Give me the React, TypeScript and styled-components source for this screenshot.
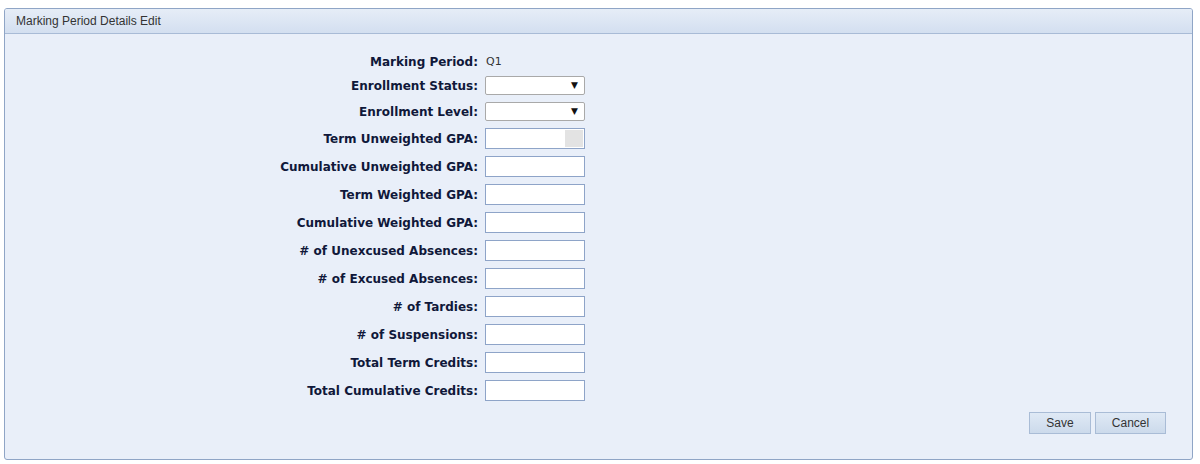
import React from "react";
import styled, { createGlobalStyle } from "styled-components";

const Global = createGlobalStyle`
  html, body { margin: 0; padding: 0; background: #ffffff; }
  body { font-family: "DejaVu Sans", Verdana, sans-serif; }
  * { box-sizing: border-box; }
`;

const Page = styled.div`
  padding: 8px 7px 4px 4px;
`;

const Panel = styled.section`
  border: 1px solid #8fa5c6;
  border-radius: 3px;
  background: #e9eff9;
  height: 452px;
  display: flex;
  flex-direction: column;
  overflow: hidden;
`;

const Header = styled.header`
  height: 25px;
  display: flex;
  align-items: center;
  padding-left: 11px;
  background: linear-gradient(to bottom, #e6edf7 0%, #d3dff0 100%);
  border-bottom: 1px solid #a8bbd6;
  font-family: "Liberation Sans", Arial, sans-serif;
  font-size: 12px;
  color: #333333;
`;

const Body = styled.div`
  flex: 1;
  display: flex;
  flex-direction: column;
  padding-top: 15px;
`;

const Form = styled.div`
  display: grid;
  grid-template-columns: 473px 1fr;
  column-gap: 7px;
`;

const Label = styled.div<{ $h: number }>`
  height: ${(p) => p.$h}px;
  padding-top: 2px;
  display: flex;
  align-items: center;
  justify-content: flex-end;
  font-family: "DejaVu Sans", Verdana, sans-serif;
  font-weight: bold;
  font-size: 12px;
  color: #10183a;
  white-space: nowrap;
`;

const Cell = styled.div<{ $h: number }>`
  height: ${(p) => p.$h}px;
  display: flex;
  align-items: center;
`;

const Value = styled.span`
  font-family: "DejaVu Sans", sans-serif;
  font-size: 11px;
  color: #333333;
  padding-left: 1px;
  padding-top: 2px;
`;

const Select = styled.div`
  width: 100px;
  height: 19px;
  background: #ffffff;
  border: 1px solid #a9a9a9;
  border-radius: 2px;
  display: flex;
  align-items: center;
  justify-content: flex-end;
  padding-right: 6px;
  font-size: 9px;
  color: #111111;
`;

const Input = styled.div`
  width: 100px;
  height: 21px;
  background: #ffffff;
  border: 1px solid #8ea4c8;
  display: flex;
  justify-content: flex-end;
  padding: 1px;
`;

const Spin = styled.div`
  width: 18px;
  height: 100%;
  background: #e3e3e3;
`;

const Actions = styled.div`
  display: flex;
  justify-content: flex-end;
  gap: 4px;
  padding-right: 26px;
  margin-top: 8px;
`;

const Button = styled.button<{ $w: number }>`
  width: ${(p) => p.$w}px;
  height: 22px;
  border: 1px solid #a9bcd6;
  background: linear-gradient(to bottom, #dfe9f5 0%, #ccdaeb 100%);
  font-family: "Liberation Sans", Arial, sans-serif;
  font-size: 12px;
  color: #333333;
  padding: 0;
  cursor: pointer;
`;

type Field = { label: string; kind: "value" | "select" | "input" | "locked"; value?: string };

const fields: Field[] = [
  { label: "Marking Period:", kind: "value", value: "Q1" },
  { label: "Enrollment Status:", kind: "select" },
  { label: "Enrollment Level:", kind: "select" },
  { label: "Term Unweighted GPA:", kind: "locked" },
  { label: "Cumulative Unweighted GPA:", kind: "input" },
  { label: "Term Weighted GPA:", kind: "input" },
  { label: "Cumulative Weighted GPA:", kind: "input" },
  { label: "# of Unexcused Absences:", kind: "input" },
  { label: "# of Excused Absences:", kind: "input" },
  { label: "# of Tardies:", kind: "input" },
  { label: "# of Suspensions:", kind: "input" },
  { label: "Total Term Credits:", kind: "input" },
  { label: "Total Cumulative Credits:", kind: "input" },
];

const heightOf = (k: Field["kind"]) => (k === "value" ? 23 : k === "select" ? 26 : 28);

export default function App() {
  return (
    <>
      <Global />
      <Page>
        <Panel>
          <Header>Marking Period Details Edit</Header>
          <Body>
            <Form>
              {fields.map((f) => {
                const h = heightOf(f.kind);
                return (
                  <React.Fragment key={f.label}>
                    <Label $h={h}>{f.label}</Label>
                    <Cell $h={h}>
                      {f.kind === "value" && <Value>{f.value}</Value>}
                      {f.kind === "select" && <Select>▼</Select>}
                      {f.kind === "input" && <Input />}
                      {f.kind === "locked" && (
                        <Input>
                          <Spin />
                        </Input>
                      )}
                    </Cell>
                  </React.Fragment>
                );
              })}
            </Form>
            <Actions>
              <Button $w={62}>Save</Button>
              <Button $w={71}>Cancel</Button>
            </Actions>
          </Body>
        </Panel>
      </Page>
    </>
  );
}
